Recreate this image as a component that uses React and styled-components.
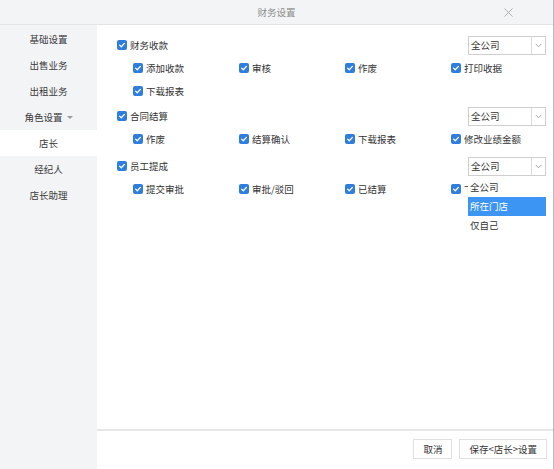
import React from 'react';
import styled, { createGlobalStyle } from 'styled-components';

const Global = createGlobalStyle`
  html, body { margin: 0; padding: 0; background: #fff; }
  body {
    font-family: "Noto Sans CJK SC", "Noto Sans", "Liberation Sans", sans-serif;
    font-size: 9.5px;
    color: #333;
  }
  * { box-sizing: border-box; }
`;

const Dialog = styled.div`
  width: 100%;
  height: 100vh;
  display: flex;
  flex-direction: column;
  border-right: 1px solid #b9b9c6;
  overflow: hidden;
`;

const Header = styled.div`
  height: 25px;
  flex: none;
  background: #f3f4f6;
  border-bottom: 1px solid #e3e4e7;
  display: flex;
  align-items: center;
  justify-content: center;
  position: relative;
  color: #8d8d8d;
  font-size: 9.5px;
`;

const Close = styled.div`
  position: absolute;
  right: 40px;
  top: 8px;
  width: 9px;
  height: 9px;
  display: flex;
`;

const Body = styled.div`
  flex: 1;
  display: flex;
  min-height: 0;
`;

const Sidebar = styled.div`
  width: 97px;
  flex: none;
  background: #f3f4f6;
  padding-top: 1px;
  display: flex;
  flex-direction: column;
`;

const NavItem = styled.div`
  height: 26px;
  text-align: center;
  color: #3a3a3a;
  background: ${p => (p.$active ? '#fff' : 'transparent')};
  display: flex;
  align-items: center;
  justify-content: center;
  gap: 4px;
`;

const Caret = styled.span`
  width: 0;
  height: 0;
  border-left: 3px solid transparent;
  border-right: 3px solid transparent;
  border-top: 3px solid #9a9a9a;
  margin-top: 1px;
`;

const Main = styled.div`
  flex: 1;
  min-width: 0;
  display: flex;
  flex-direction: column;
  background: #fff;
`;

const Content = styled.div`
  flex: 1;
  padding: 9px 7px 0 20px;
`;

const Section = styled.div`
  margin-bottom: ${p => p.$gap || 3}px;
`;

const SectionHead = styled.div`
  height: 22px;
  display: flex;
  align-items: center;
  justify-content: space-between;
`;

const Children = styled.div`
  display: grid;
  grid-template-columns: repeat(3, 106px) minmax(0, 1fr);
  grid-auto-rows: 23px;
  padding-left: 16px;
`;

const CheckItem = styled.label`
  display: flex;
  align-items: center;
  gap: 3px;
  white-space: nowrap;
  color: #333;
  line-height: 14px;
`;

const Box = styled.span`
  width: 10px;
  height: 10px;
  border-radius: 2px;
  background: #2f7ddc;
  display: flex;
  align-items: center;
  justify-content: center;
  flex: none;
`;

const SelectWrap = styled.div`
  position: relative;
`;

const SelectBox = styled.div`
  width: 78px;
  height: 19px;
  border: 1px solid #cfcfcf;
  display: flex;
  align-items: stretch;
  background: #fff;
`;

const SelectText = styled.div`
  flex: 1;
  padding-left: 2px;
  display: flex;
  align-items: center;
  color: #333;
`;

const SelectArrow = styled.div`
  width: 14px;
  border-left: 1px solid #dcdcdc;
  display: flex;
  align-items: center;
  justify-content: center;
`;

const Menu = styled.div`
  position: absolute;
  left: 0;
  top: 20px;
  width: 78px;
  background: #fff;
  z-index: 2;
  padding: 1px 0;
`;

const Option = styled.div`
  height: 19px;
  line-height: 19px;
  padding-left: 2px;
  color: ${p => (p.$hover ? '#fff' : '#333')};
  background: ${p => (p.$hover ? '#3d95f3' : '#fff')};
`;

const Footer = styled.div`
  height: 40px;
  flex: none;
  border-top: 2px solid #e6e6e6;
  display: flex;
  align-items: center;
  justify-content: flex-end;
  gap: 7px;
  padding-right: 6px;
  padding-bottom: 2px;
`;

const Button = styled.button`
  height: 20px;
  padding: 0 9px;
  border: 1px solid #e0e0e0;
  background: #fff;
  color: #333;
  font-family: inherit;
  font-size: 9.5px;
  line-height: 18px;
  cursor: pointer;
`;

const Check = () => (
  <Box>
    <svg width="8" height="8" viewBox="0 0 8 8">
      <path d="M1.6 4.1 L3.3 5.7 L6.4 2.4" fill="none" stroke="#fff" strokeWidth="1.3" strokeLinecap="round" strokeLinejoin="round" />
    </svg>
  </Box>
);

const Item = ({ label }) => (
  <CheckItem>
    <Check />
    <span>{label}</span>
  </CheckItem>
);

const Select = ({ open }) => (
  <SelectWrap>
    <SelectBox>
      <SelectText>全公司</SelectText>
      <SelectArrow>
        <svg width="7" height="5" viewBox="0 0 7 5">
          <path d="M0.8 1 L3.5 3.8 L6.2 1" fill="none" stroke="#9a9a9a" strokeWidth="0.9" />
        </svg>
      </SelectArrow>
    </SelectBox>
    {open && (
      <Menu>
        <Option>全公司</Option>
        <Option $hover>所在门店</Option>
        <Option>仅自己</Option>
      </Menu>
    )}
  </SelectWrap>
);

const nav = ['基础设置', '出售业务', '出租业务'];

const sections = [
  { title: '财务收款', items: ['添加收款', '审核', '作废', '打印收据', '下载报表'], gap: 3 },
  { title: '合同结算', items: ['作废', '结算确认', '下载报表', '修改业绩金额'], gap: 5 },
  { title: '员工提成', items: ['提交审批', '审批/驳回', '已结算', '下载报表'], open: true },
];

export default function App() {
  return (
    <>
      <Global />
      <Dialog>
        <Header>
          财务设置
          <Close>
            <svg width="9" height="9" viewBox="0 0 9 9">
              <path d="M0.5 0.5 L8.5 8.5 M8.5 0.5 L0.5 8.5" stroke="#a8a8a8" strokeWidth="0.9" />
            </svg>
          </Close>
        </Header>
        <Body>
          <Sidebar>
            {nav.map(n => <NavItem key={n}>{n}</NavItem>)}
            <NavItem>角色设置<Caret /></NavItem>
            <NavItem $active>店长</NavItem>
            <NavItem>经纪人</NavItem>
            <NavItem>店长助理</NavItem>
          </Sidebar>
          <Main>
            <Content>
              {sections.map(s => (
                <Section key={s.title} $gap={s.gap}>
                  <SectionHead>
                    <Item label={s.title} />
                    <Select open={s.open} />
                  </SectionHead>
                  <Children>
                    {s.items.map((it, i) => <Item key={i} label={it} />)}
                  </Children>
                </Section>
              ))}
            </Content>
            <Footer>
              <Button>取消</Button>
              <Button>保存&lt;店长&gt;设置</Button>
            </Footer>
          </Main>
        </Body>
      </Dialog>
    </>
  );
}
